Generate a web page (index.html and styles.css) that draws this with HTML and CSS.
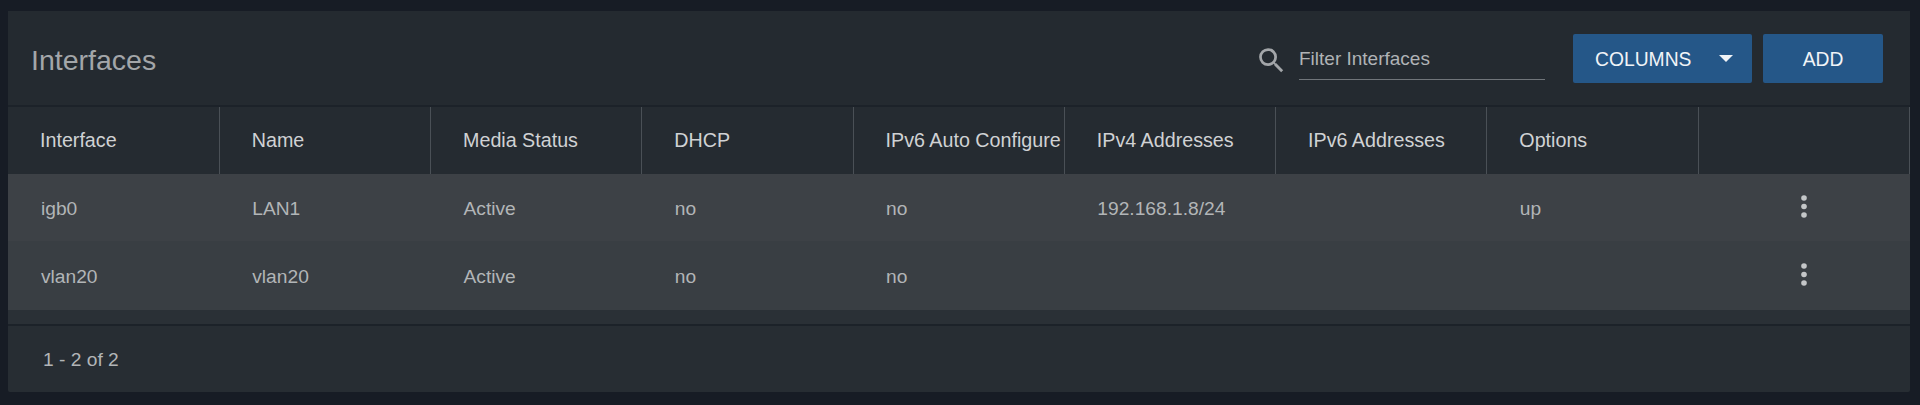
FILE: index.html
```html
<!DOCTYPE html>
<html lang="en">
<head>
<meta charset="utf-8">
<title>Interfaces</title>
<link rel="stylesheet" href="styles.css">
</head>
<body>
<main class="card">
  <header class="toolbar">
    <h1 class="title">Interfaces</h1>
    <div class="actions">
      <div class="filter">
        <svg class="search-icon" viewBox="0 0 24 24" width="33" height="33" aria-hidden="true"><path d="M15.5 14h-.79l-.28-.27A6.47 6.47 0 0 0 16 9.5 6.5 6.5 0 1 0 9.5 16c1.61 0 3.09-.59 4.23-1.57l.27.28v.79l5 4.99L20.49 19l-4.99-5zm-6 0C7.01 14 5 11.99 5 9.5S7.01 5 9.5 5 14 7.01 14 9.5 11.99 14 9.5 14z"/></svg>
        <input class="filter-input" type="text" placeholder="Filter Interfaces">
      </div>
      <button class="btn btn-columns" type="button">COLUMNS<span class="caret"></span></button>
      <button class="btn btn-add" type="button">ADD</button>
    </div>
  </header>
  <table class="grid">
    <thead>
      <tr>
        <th>Interface</th><th>Name</th><th>Media Status</th><th>DHCP</th><th>IPv6 Auto Configure</th><th>IPv4 Addresses</th><th>IPv6 Addresses</th><th>Options</th><th></th>
      </tr>
    </thead>
    <tbody>
      <tr class="row-a">
        <td>igb0</td><td>LAN1</td><td>Active</td><td>no</td><td>no</td><td>192.168.1.8/24</td><td></td><td>up</td>
        <td class="menu-cell"><svg class="kebab" viewBox="0 0 6 23" width="6" height="23" aria-hidden="true"><circle cx="3" cy="3" r="2.8"/><circle cx="3" cy="11.5" r="2.8"/><circle cx="3" cy="20" r="2.8"/></svg></td>
      </tr>
      <tr class="row-b">
        <td>vlan20</td><td>vlan20</td><td>Active</td><td>no</td><td>no</td><td></td><td></td><td></td>
        <td class="menu-cell"><svg class="kebab" viewBox="0 0 6 23" width="6" height="23" aria-hidden="true"><circle cx="3" cy="3" r="2.8"/><circle cx="3" cy="11.5" r="2.8"/><circle cx="3" cy="20" r="2.8"/></svg></td>
      </tr>
    </tbody>
  </table>
  <div class="spacer"></div>
  <footer class="footer">1 - 2 of 2</footer>
</main>
</body>
</html>
```
FILE: styles.css
```css
* { box-sizing: border-box; }
html, body { height: 100%; }
body {
  margin: 0;
  padding: 11px 10px 13px 8px;
  background: #171c25;
  font-family: "Liberation Sans", Arial, sans-serif;
  overflow: hidden;
}
.card {
  background: #272d33;
  border-radius: 2px;
  height: 381px;
  display: flex;
  flex-direction: column;
}
.toolbar {
  height: 96px;
  flex: none;
  display: flex;
  align-items: flex-start;
  justify-content: space-between;
  background: #242a30;
  border-bottom: 2px solid #1c2229;
}
.title {
  margin: 33px 0 0 23px;
  font-size: 28.5px;
  line-height: 32px;
  font-weight: 400;
  color: #a3a6a9;
}
.actions {
  display: flex;
  align-items: flex-start;
  margin: 23px 27px 0 0;
}
.filter {
  display: flex;
  align-items: flex-start;
  margin-right: 28px;
}
.search-icon {
  fill: #a3a6a9;
  margin: 10px 11px 0 0;
}
.filter-input {
  width: 246px;
  height: 46px;
  padding: 5px 0 0;
  background: transparent;
  border: 0;
  border-bottom: 1px solid #70757a;
  outline: 0;
  font: 400 19px "Liberation Sans", Arial, sans-serif;
  color: #b9bcbe;
}
.filter-input::placeholder { color: #b0b3b6; opacity: 1; }
.btn {
  height: 49px;
  border: 0;
  border-radius: 2px;
  background: #255788;
  color: #f1f4f7;
  font: 400 19.3px "Liberation Sans", Arial, sans-serif;
  display: flex;
  align-items: center;
  justify-content: center;
  padding-top: 3px;
}
.btn-columns { width: 179px; margin-right: 11px; padding: 3px 19px 0 22px; justify-content: space-between; }
.btn-add { width: 120px; }
.caret {
  width: 0;
  height: 0;
  border-left: 7px solid transparent;
  border-right: 7px solid transparent;
  border-top: 7px solid #f1f4f7;
  margin-top: -4px;
}
.grid {
  width: 100%;
  flex: none;
  table-layout: fixed;
  border-collapse: collapse;
  font-size: 19.2px;
}
.grid th {
  height: 67px;
  padding: 0 0 0 32px;
  text-align: left;
  font-weight: 400;
  font-size: 19.7px;
  color: #d0d2d4;
  background: #252b31;
  border-right: 1px solid #4a5056;
  white-space: nowrap;
}
.grid td {
  padding: 2px 0 0 33px;
  color: #b2b5b7;
}
.row-a td { background: #3d4146; height: 67px; }
.row-b td { background: #393e43; height: 69px; }
.menu-cell { text-align: center; }
.grid td.menu-cell { padding: 0; line-height: 0; }
.kebab { fill: #c4c6c8; position: relative; top: -1px; }
.spacer {
  height: 16px;
  flex: none;
  background: #2a3036;
  border-bottom: 2px solid #1c2229;
}
.footer {
  flex: 1;
  display: flex;
  align-items: center;
  padding: 2px 0 0 35px;
  font-size: 19.2px;
  color: #b2b5b7;
}
```
